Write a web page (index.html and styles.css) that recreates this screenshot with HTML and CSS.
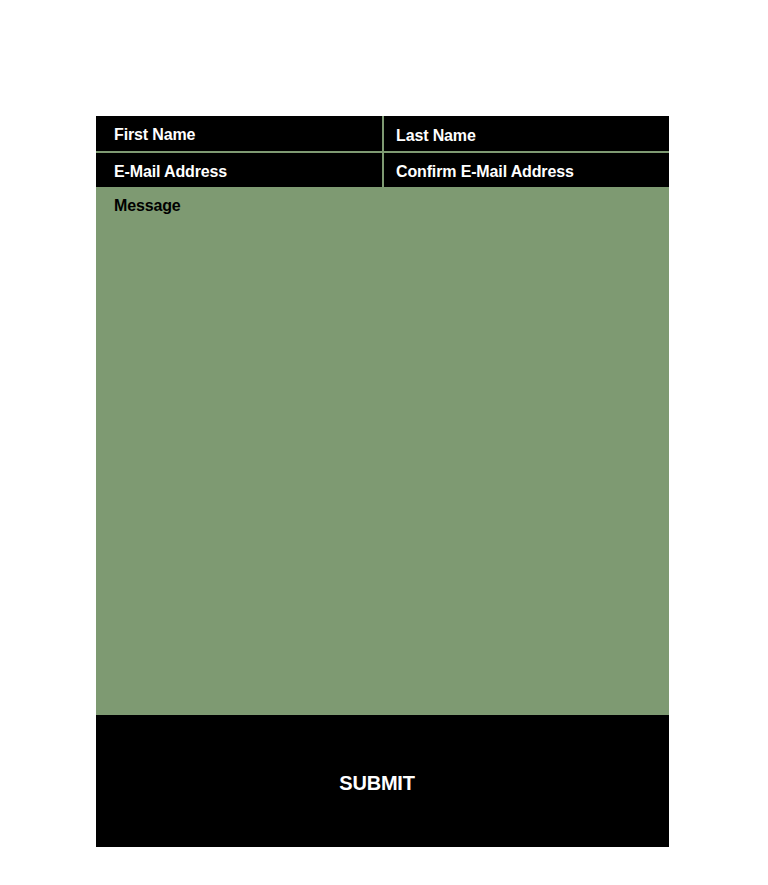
FILE: index.html
```html
<!DOCTYPE html>
<html>
<head>
<meta charset="utf-8">
<link rel="stylesheet" href="styles.css">
</head>
<body>
<form class="contact">
  <div class="grid">
    <div class="cell left top"><span class="label">First Name</span></div>
    <div class="cell right top"><span class="label low">Last Name</span></div>
    <div class="cell left"><span class="label">E-Mail Address</span></div>
    <div class="cell right"><span class="label">Confirm E-Mail Address</span></div>
  </div>
  <div class="message"><span class="label dark">Message</span></div>
  <div class="submit"><span class="submit-text">SUBMIT</span></div>
</form>
</body>
</html>
```

FILE: styles.css
```css
html, body {
  margin: 0;
  padding: 0;
  background: #ffffff;
}
body {
  font-family: "Liberation Sans", Arial, sans-serif;
}
.contact {
  width: 573px;
  margin: 116px 0 0 96px;
  display: flex;
  flex-direction: column;
}
.grid {
  display: grid;
  grid-template-columns: 286px 285px;
  gap: 2px;
  background: #7e9a72;
}
.cell {
  background: #000;
  height: 34px;
  display: flex;
  align-items: center;
  padding-top: 4px;
  box-sizing: border-box;
}
.cell.top { height: 35px; padding-top: 2px; }
.cell.left { padding-left: 18px; }
.cell.right { padding-left: 12px; }
.label {
  color: #fff;
  font-weight: bold;
  font-size: 16px;
  line-height: 18px;
  letter-spacing: -0.14px;
}
.label.low { position: relative; top: 1px; }
.message {
  background: #7e9a72;
  height: 528px;
  padding: 10px 0 0 18px;
  box-sizing: border-box;
}
.label.dark { color: #000; }
.submit {
  background: #000;
  height: 132px;
  display: flex;
  align-items: center;
  justify-content: center;
  padding-right: 11px;
  padding-top: 5px;
  box-sizing: border-box;
}
.submit-text {
  color: #fff;
  font-weight: bold;
  font-size: 20px;
  letter-spacing: -0.2px;
}
```
